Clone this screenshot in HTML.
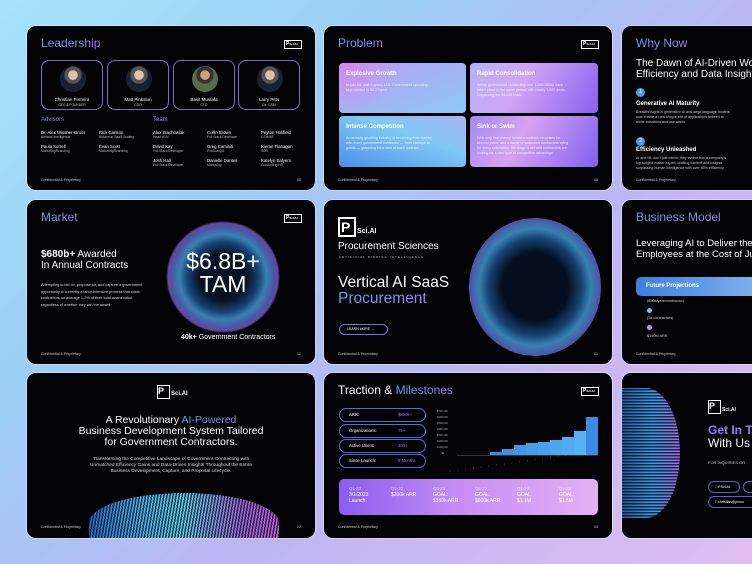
<!DOCTYPE html>
<html><head><meta charset="utf-8"><style>
*{margin:0;padding:0;box-sizing:border-box}
body{width:752px;height:564px;overflow:hidden;position:relative;font-family:"Liberation Sans",sans-serif;color:#fff;
background:linear-gradient(135deg,#a4e4fa 0%,#9ccff6 30%,#bcb6f4 60%,#e0bdf2 100%);}
.card{position:absolute;background:#030305;border-radius:9px;overflow:hidden;box-shadow:0 0 0 1px rgba(255,255,255,.35)}
.a{position:absolute;white-space:nowrap}
.gt{background:linear-gradient(90deg,#5aa8f0,#a57cf0);-webkit-background-clip:text;background-clip:text;color:transparent}
.title{font-size:12px;font-weight:400}
.foot{font-size:3.5px;color:#ccc}
.logo{position:absolute;width:18px;height:9px;border:1.5px solid #fff;font-size:5px;font-weight:bold;line-height:6px;padding-left:1px}
.pb{position:absolute;width:62px;height:50px;border:1px solid #7a6ad8;border-radius:8px}
.av{position:absolute;left:18px;top:5px;width:26px;height:26px;border-radius:50%;background:radial-gradient(circle at 50% 35%,#e0c0a8 0 22%,#555 23% 40%,#1a2030 41%)}
.nm{position:absolute;width:100%;text-align:center;font-size:4.5px;top:36px}
.rl{position:absolute;width:100%;text-align:center;font-size:3.3px;top:42px;color:#ccc}
.n{font-size:4.3px}.r{font-size:3.3px;color:#bbb}
.box{position:absolute;border-radius:4px;padding:8px 7px}
.box b{display:block;font-size:6px;font-weight:bold;margin-bottom:6px}
.box p{font-size:3.6px;line-height:5px;color:#eef}
.orb{position:absolute;border-radius:50%}
.pill{position:absolute;left:339px;width:87px;height:14px;border:1px solid #5a6ad8;border-radius:8px;font-size:4.3px;line-height:12px;padding-left:9px}
.pill span{position:absolute;left:58px;color:#9a7cf6}
</style></head><body>

<!-- Leadership -->
<div class="card" style="left:27px;top:26px;width:288px;height:164px">
<div class="a title gt" style="left:14px;top:10px">Leadership</div>
<div class="logo" style="left:257px;top:14px">P<span style="font-size:3px">Sci.AI</span></div>
<div class="pb" style="left:14px;top:34px"><div class="av"></div><div class="nm">Christian Ferreira</div><div class="rl">CEO &amp; FOUNDER</div></div>
<div class="pb" style="left:80px;top:34px"><div class="av"></div><div class="nm">Matt Pinkston</div><div class="rl">CGO</div></div>
<div class="pb" style="left:146px;top:34px"><div class="av" style="background:radial-gradient(circle at 50% 35%,#c9a080 0 22%,#333 23% 40%,#5a6a48 41%)"></div><div class="nm">Basit Mustafa</div><div class="rl">CTO</div></div>
<div class="pb" style="left:211px;top:34px"><div class="av"></div><div class="nm">Larry Pitts</div><div class="rl">Dir. CSM</div></div>
<div class="a gt" style="left:14px;top:91px;font-size:6px">Advisors</div>
<div class="a" style="left:126px;top:91px;font-size:6px;color:#b79af0">Team</div>
<div class="a" style="left:14px;top:104px"><div class="n">Dr. Alex Wissner-Gross</div><div class="r">Artificial Intelligence</div><div class="n" style="margin-top:5px">Paula Sorrell</div><div class="r">Marketing/Branding</div></div>
<div class="a" style="left:72px;top:104px"><div class="n">Rick Carlson</div><div class="r">Business/ SaaS Scaling</div><div class="n" style="margin-top:5px">Evan Scott</div><div class="r">Marketing/Branding</div></div>
<div class="a" style="left:126px;top:104px"><div class="n">Alex Stachowiak</div><div class="r">Head of AI</div><div class="n" style="margin-top:5px">David Kay</div><div class="r">Full Stack Developer</div><div class="n" style="margin-top:5px">Josh Hall</div><div class="r">Full Stack Developer</div></div>
<div class="a" style="left:180px;top:104px"><div class="n">Collin Brown</div><div class="r">Full Stack Developer</div><div class="n" style="margin-top:5px">Greg Caminiti</div><div class="r">Product/QA</div><div class="n" style="margin-top:5px">Danielle Dantes</div><div class="r">Marketing</div></div>
<div class="a" style="left:234px;top:104px"><div class="n">Peyton Holifield</div><div class="r">CSM/AE</div><div class="n" style="margin-top:5px">Kieran Flanagan</div><div class="r">SDR</div><div class="n" style="margin-top:5px">Katelyn Salyers</div><div class="r">Accounting/HR</div></div>
<div class="a foot" style="left:14px;top:152px">Confidential &amp; Proprietary</div>
<div class="a foot" style="left:270px;top:152px">05</div>
</div>

<!-- Problem -->
<div class="card" style="left:324px;top:26px;width:288px;height:164px">
<div class="a title gt" style="left:14px;top:10px">Problem</div>
<div class="logo" style="left:257px;top:14px">P<span style="font-size:3px">Sci.AI</span></div>
<div class="box" style="left:15px;top:37px;width:127px;height:50px;background:radial-gradient(circle at 10% 0%,#d08af0,transparent 40%),linear-gradient(160deg,#b9a0f4,#8cc8f6)"><b>Explosive Growth</b><p>In just the past 5 years, U.S. Government spending<br>skyrocketed to $6.2T/year.</p></div>
<div class="box" style="left:146px;top:37px;width:128px;height:50px;background:linear-gradient(120deg,#b8b0f6,#d0a4f4 40%,#8a60f2)"><b>Rapid Consolidation</b><p>Within government contracting over 1,250 M&amp;As have<br>taken place in the same period, with nearly 1,000 deals<br>surpassing the $100M mark.</p></div>
<div class="box" style="left:15px;top:90px;width:127px;height:51px;background:linear-gradient(20deg,#4a90e8,#80c8f6 60%,#a8b4f4)"><b>Intense Competition</b><p>An already gruelling industry is becoming even harder,<br>with every government contractor — from startups to<br>giants — grappling for a shot at each contract.</p></div>
<div class="box" style="left:146px;top:90px;width:128px;height:51px;background:linear-gradient(120deg,#a48af2,#d6a2f2 40%,#8060f0)"><b>Sink or Swim</b><p>With only one chance to win a contract, no prizes for<br>second place, and a horde of seasoned contractors vying<br>for every solicitation, the stage is set and contractors are<br>looking for a new type of competitive advantage.</p></div>
<div class="a foot" style="left:14px;top:152px">Confidential &amp; Proprietary</div>
<div class="a foot" style="left:270px;top:152px">06</div>
</div>

<!-- Why Now -->
<div class="card" style="left:622px;top:26px;width:150px;height:164px">
<div class="a title gt" style="left:14px;top:10px">Why Now</div>
<div class="a" style="left:14px;top:32px;font-size:10px;line-height:11px">The Dawn of AI-Driven Work<br>Efficiency and Data Insights</div>
<div class="a" style="left:14px;top:62px;width:9px;height:9px;border-radius:50%;background:#4a9ae8;font-size:5px;text-align:center;line-height:9px">1</div>
<div class="a" style="left:14px;top:75px;font-size:6px;font-weight:bold">Generative AI Maturity</div>
<div class="a" style="left:14px;top:84px;font-size:3.6px;line-height:5px;color:#ccc">Breakthroughs in generative AI and large language models<br>now enable a new unique era of applications tailored to<br>niche industries and use cases</div>
<div class="a" style="left:14px;top:111px;width:9px;height:9px;border-radius:50%;background:#4a9ae8;font-size:5px;text-align:center;line-height:9px">2</div>
<div class="a" style="left:14px;top:121px;font-size:6px;font-weight:bold">Efficiency Unleashed</div>
<div class="a" style="left:14px;top:130px;font-size:3.6px;line-height:5px;color:#ccc">AI and ML don't just mimic; they evolve into a company's<br>top subject matter expert, crafting content and insights<br>surpassing human intelligence with over 80% efficiency.</div>
<div class="a foot" style="left:14px;top:152px">Confidential &amp; Proprietary</div>
</div>

<!-- Market -->
<div class="card" style="left:27px;top:200px;width:288px;height:164px">
<div class="a title gt" style="left:14px;top:10px">Market</div>
<div class="logo" style="left:257px;top:14px">P<span style="font-size:3px">Sci.AI</span></div>
<div class="a" style="left:14px;top:49px;font-size:10px;line-height:11px"><b>$680b+</b> Awarded<br>In Annual Contracts</div>
<div class="a" style="left:14px;top:82px;font-size:3.8px;line-height:6.5px;color:#ddd">Attempting to bid on, propose for, and capture a government<br>opportunity is currently a labor-intensive process that costs<br>contractors on average 1-2% of their total award value,<br>regardless of whether they win the award.</div>
<div class="orb" style="left:140px;top:22px;width:112px;height:110px;background:radial-gradient(ellipse at 50% 50%,#0a1a30 0 30%,#1f5a9a 45%,#4ab0f0 55%,#6a70e0 65%,#9a5ad8 72%,transparent 76%);filter:blur(.5px)"></div>
<div class="orb" style="left:140px;top:22px;width:112px;height:110px;background-image:radial-gradient(#000 0.6px,transparent 0.9px);background-size:2px 2px;opacity:.6"></div>
<div class="a" style="left:140px;top:50px;width:112px;text-align:center;font-size:23px;line-height:23px">$6.8B+<br>TAM</div>
<div class="a" style="left:154px;top:134px;font-size:7px"><b>40k+</b> Government Contractors</div>
<div class="a foot" style="left:14px;top:152px">Confidential &amp; Proprietary</div>
<div class="a foot" style="left:270px;top:152px">12</div>
</div>

<!-- Hero -->
<div class="card" style="left:324px;top:200px;width:288px;height:164px">
<div class="a" style="left:14px;top:17px;width:18px;height:20px;border:2px solid #fff;font-size:14px;font-weight:bold;line-height:16px;padding-left:1px">P</div>
<div class="a" style="left:33px;top:28px;font-size:7px;font-weight:bold">Sci.AI</div>
<div class="a" style="left:14px;top:41px;font-size:10px">Procurement Sciences</div>
<div class="a" style="left:15px;top:55px;font-size:2.8px;letter-spacing:1.2px;color:#ccc">ARTIFICIAL BIDDING INTELLIGENCE</div>
<div class="a" style="left:14px;top:75px;font-size:15.5px;line-height:16px">Vertical AI SaaS<br><span class="gt">Procurement</span></div>
<div class="a" style="left:15px;top:124px;width:49px;height:11px;border:1px solid #6a7ad8;border-radius:6px;font-size:3.5px;line-height:9px;padding-left:7px">LEARN MORE &#8594;</div>
<div class="orb" style="left:145px;top:18px;width:132px;height:138px;background:radial-gradient(ellipse at 50% 50%,#071428 0 35%,#1f5a9a 50%,#48b0f0 60%,#6a70e0 70%,#9a5ad8 76%,transparent 80%)"></div>
<div class="orb" style="left:145px;top:18px;width:132px;height:138px;background-image:radial-gradient(#000 0.6px,transparent 0.9px);background-size:2px 2px;opacity:.6"></div>
<div class="a foot" style="left:14px;top:152px">Confidential &amp; Proprietary</div>
<div class="a foot" style="left:270px;top:152px">01</div>
</div>

<!-- Business Model -->
<div class="card" style="left:622px;top:200px;width:150px;height:164px">
<div class="a title gt" style="left:14px;top:10px">Business Model</div>
<div class="a" style="left:14px;top:38px;font-size:9.5px;line-height:11px">Leveraging AI to Deliver the<br>Employees at the Cost of Ju</div>
<div class="a" style="left:14px;top:77px;width:140px;height:19px;border-radius:5px;background:linear-gradient(90deg,#3a80e0,#8ab8f0);font-size:6px;font-weight:bold;line-height:19px;padding-left:10px">Future Projections</div>
<div class="a" style="left:25px;top:99px;font-size:3.8px;color:#ccc">($50k/year/contractor)</div>
<div class="a" style="left:25px;top:108px;width:5px;height:5px;border-radius:50%;background:#7ac0f6"></div>
<div class="a" style="left:25px;top:116px;font-size:3.8px;color:#ccc">(3k contractors)</div>
<div class="a" style="left:25px;top:125px;width:5px;height:5px;border-radius:50%;background:#d08af0"></div>
<div class="a" style="left:25px;top:134px;font-size:3.8px;color:#ccc">$150M ARR</div>
<div class="a foot" style="left:14px;top:152px">Confidential &amp; Proprietary</div>
</div>

<!-- Revolutionary -->
<div class="card" style="left:27px;top:373px;width:288px;height:165px">
<div class="a" style="left:130px;top:12px;width:13px;height:14px;border:1.5px solid #fff;font-size:9px;font-weight:bold;line-height:11px">P</div>
<div class="a" style="left:144px;top:18px;font-size:6px;font-weight:bold">Sci.AI</div>
<div class="a" style="left:0;top:42px;width:288px;text-align:center;font-size:10.5px;line-height:11px;white-space:normal">A Revolutionary <span class="gt">AI-Powered</span><br>Business Development System Tailored<br>for Government Contractors.</div>
<div class="a" style="left:0;top:84px;width:288px;text-align:center;font-size:4.8px;line-height:6px;white-space:normal;color:#ddd">Transforming the Competitive Landscape of Government Contracting with<br>Unmatched Efficiency Gains and Data-Driven Insights Throughout the Entire<br>Business Development, Capture, and Proposal Lifecycle.</div>
<div class="a" style="left:62px;top:120px;width:190px;height:60px;border-radius:50% 50% 0 0;background:repeating-linear-gradient(100deg,transparent 0 1.5px,rgba(0,0,0,.7) 1.5px 3px),linear-gradient(90deg,#2a70d0,#50b8f0 30%,#60d0f0 50%,#9a6ae0 80%,#c060e0)"></div>
<div class="a foot" style="left:14px;top:152px">Confidential &amp; Proprietary</div>
<div class="a foot" style="left:270px;top:152px">02</div>
</div>

<!-- Traction -->
<div class="card" style="left:324px;top:373px;width:288px;height:165px">
<div class="a title" style="left:14px;top:10px">Traction &amp; <span class="gt">Milestones</span></div>
<div class="logo" style="left:257px;top:14px">P<span style="font-size:3px">Sci.AI</span></div>
</div>
<div class="pill" style="top:408px">ARR:<span>$800k+</span></div>
<div class="pill" style="top:424px">Organizations:<span>75+</span></div>
<div class="pill" style="top:439px">Active Users:<span>400+</span></div>
<div class="pill" style="top:454px">Since Launch:<span>8 Months</span></div>
<div class="a" style="left:437px;top:409px;font-size:2.6px;line-height:6px;color:#aaa">$700,000<br>$600,000<br>$500,000<br>$400,000<br>$300,000<br>$200,000<br>$100,000<br>&nbsp;&nbsp;&nbsp;&nbsp;&nbsp;&nbsp;$0</div>
<div class="a" style="left:457px;top:455px;width:141px;height:1px;background:#333"></div>
<div class="a" style="left:490px;top:452px;width:12px;height:3px;background:#3a8ae0"></div>
<div class="a" style="left:502px;top:449px;width:12px;height:6px;background:#3c90e6"></div>
<div class="a" style="left:514px;top:445px;width:12px;height:10px;background:#4096ea"></div>
<div class="a" style="left:526px;top:443px;width:12px;height:12px;background:#449cec"></div>
<div class="a" style="left:538px;top:442px;width:12px;height:13px;background:#48a0ee"></div>
<div class="a" style="left:550px;top:440px;width:12px;height:15px;background:#4ca6f0"></div>
<div class="a" style="left:562px;top:437px;width:12px;height:18px;background:#50aaf2"></div>
<div class="a" style="left:574px;top:431px;width:12px;height:24px;background:#56b0f4"></div>
<div class="a" style="left:586px;top:417px;width:12px;height:38px;background:#3a8ae6"></div>
<div class="a" style="left:450px;top:460px;width:148px;height:10px;font-size:2.5px;color:#aaa;letter-spacing:7px;transform:skewY(-8deg)">//////////////////</div>
<div class="a" style="left:339px;top:479px;width:259px;height:36px;border-radius:5px;background:linear-gradient(90deg,#8a5cf0,#c48cf4 45%,#e4b0f4)"></div>
<div class="a" style="left:349px;top:486px;font-size:4.3px;color:#d8c8ff;line-height:6px">Q1-23<br><span style="color:#fff;font-size:5px">3/1/2023<br>Launch</span></div>
<div class="a" style="left:391px;top:486px;font-size:4.3px;color:#d8c8ff;line-height:6px">Q2-23<br><span style="color:#fff;font-size:5px">$200k ARR</span></div>
<div class="a" style="left:433px;top:486px;font-size:4.3px;color:#e8d8ff;line-height:6px">Q3-23<br><span style="color:#fff;font-size:5px">GOAL:<br>$350k ARR</span></div>
<div class="a" style="left:475px;top:486px;font-size:4.3px;color:#e8d8ff;line-height:6px">Q4-23<br><span style="color:#fff;font-size:5px">GOAL:<br>$600k ARR</span></div>
<div class="a" style="left:517px;top:486px;font-size:4.3px;color:#f0e0ff;line-height:6px">Q1-24<br><span style="color:#fff;font-size:5px">GOAL:<br>$1.1M</span></div>
<div class="a" style="left:559px;top:486px;font-size:4.3px;color:#f0e0ff;line-height:6px">Q2-24<br><span style="color:#fff;font-size:5px">GOAL:<br>$1.5M</span></div>
<div class="a foot" style="left:338px;top:525px">Confidential &amp; Proprietary</div>
<div class="a foot" style="left:594px;top:525px">03</div>

<!-- Contact -->
<div class="card" style="left:622px;top:373px;width:150px;height:165px">
<div class="a" style="left:-10px;top:15px;width:68px;height:130px;border-radius:0 50% 50% 0;background:repeating-linear-gradient(0deg,transparent 0 1.5px,rgba(0,0,0,.7) 1.5px 3px),linear-gradient(90deg,#1a4a90,#3a9ae8 60%,#9a6ae0)"></div>
<div class="a" style="left:86px;top:27px;width:13px;height:14px;border:1.5px solid #fff;font-size:9px;font-weight:bold;line-height:11px">P</div>
<div class="a" style="left:100px;top:34px;font-size:5px;font-weight:bold">Sci.AI</div>
<div class="a" style="left:86px;top:51px;font-size:12px;line-height:13px;font-weight:bold"><span style="color:#9a7cf6">Get In To</span><br><span style="font-weight:normal">With Us</span></div>
<div class="a" style="left:86px;top:87px;font-size:4px;color:#ccc">FOR INQUIRIES OR</div>
<div class="a" style="left:86px;top:108px;width:32px;height:12px;border:1px solid #4a6ad0;border-radius:6px;font-size:3.6px;line-height:10px;padding-left:6px">&#9633; PSci.AI</div>
<div class="a" style="left:121px;top:108px;width:30px;height:12px;border:1px solid #4a6ad0;border-radius:6px"></div>
<div class="a" style="left:86px;top:123px;width:66px;height:12px;border:1px solid #4a6ad0;border-radius:6px;font-size:3.6px;line-height:10px;padding-left:6px">&#9633; christian@procu</div>
</div>
</body></html>
